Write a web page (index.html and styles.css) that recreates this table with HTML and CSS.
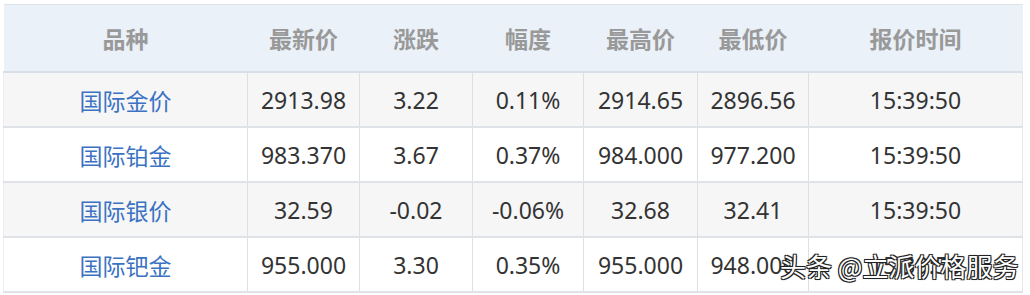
FILE: index.html
```html
<!DOCTYPE html>
<html lang="zh">
<head>
<meta charset="utf-8">
<link rel="stylesheet" href="styles.css">
</head>
<body>
<div class="wrap">
<table class="quotes">
  <colgroup>
    <col class="c1"><col class="c2"><col class="c3"><col class="c4"><col class="c5"><col class="c6"><col class="c7">
  </colgroup>
  <thead>
    <tr><th>品种</th><th>最新价</th><th>涨跌</th><th>幅度</th><th>最高价</th><th>最低价</th><th>报价时间</th></tr>
  </thead>
  <tbody>
    <tr class="odd"><td class="name">国际金价</td><td>2913.98</td><td>3.22</td><td>0.11%</td><td>2914.65</td><td>2896.56</td><td>15:39:50</td></tr>
    <tr><td class="name">国际铂金</td><td>983.370</td><td>3.67</td><td>0.37%</td><td>984.000</td><td>977.200</td><td>15:39:50</td></tr>
    <tr class="odd"><td class="name">国际银价</td><td>32.59</td><td>-0.02</td><td>-0.06%</td><td>32.68</td><td>32.41</td><td>15:39:50</td></tr>
    <tr><td class="name">国际钯金</td><td>955.000</td><td>3.30</td><td>0.35%</td><td>955.000</td><td>948.000</td><td>15:39:50</td></tr>
  </tbody>
</table>
<div class="watermark">头条 @立派价格服务</div>
</div>
</body>
</html>
```
FILE: styles.css
```css
html, body {
  margin: 0;
  padding: 0;
  background: #ffffff;
}
.wrap {
  position: relative;
  width: 1030px;
  height: 295px;
  padding: 4px 0 0 3px;
  box-sizing: border-box;
}
.quotes {
  border-collapse: collapse;
  table-layout: fixed;
  width: 1019px;
  font-family: "Noto Sans", "Noto Sans CJK SC", sans-serif;
  font-size: 23px;
  color: #333333;
}
.c1 { width: 244px; }
.c2 { width: 112px; }
.c3 { width: 113px; }
.c4 { width: 111px; }
.c5 { width: 114px; }
.c6 { width: 111px; }
.c7 { width: 214px; }
.quotes thead tr {
  background: #eaf1f8;
  border-top: 1px solid #dfe3e8;
}
.quotes th {
  height: 66px;
  padding: 0;
  font-size: 23px;
  font-weight: bold;
  color: #999999;
  text-align: center;
  font-family: "Noto Sans CJK SC", sans-serif;
  border-bottom: 2px solid #d8dfe6;
}
.quotes td {
  height: 53px;
  padding: 0;
  text-align: center;
  border-left: 1px solid #dcdfe3;
  border-right: 1px solid #dcdfe3;
  border-bottom: 2px solid #dfe3e8;
  white-space: nowrap;
}
.quotes td:first-child { border-left: 1px solid #eeeeee; }
.quotes td:last-child { border-right: 1px solid #e3e6ea; }
.quotes tr.odd td { background: #f6f6f7; }
.quotes td.name {
  color: #3b72c2;
  font-family: "Noto Sans CJK SC", sans-serif;
}
.watermark {
  position: absolute;
  left: 780px;
  top: 247px;
  font-family: "Noto Sans CJK SC", sans-serif;
  font-size: 26px;
  color: #ffffff;
  text-shadow: -1px -1px 0 #222, 1px -1px 0 #222, -1px 1px 0 #222, 1px 1px 0 #222, 0 0 2px #222;
  white-space: nowrap;
}
```
